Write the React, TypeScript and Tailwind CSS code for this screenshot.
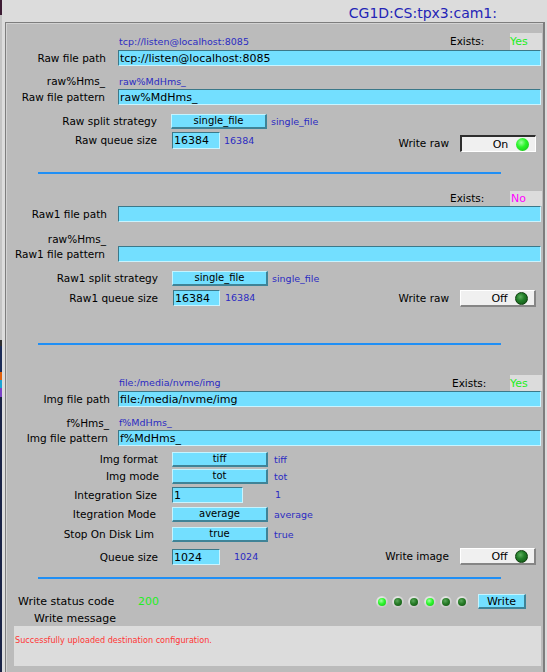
import React from 'react';

const inputCls =
  'flex items-center overflow-hidden whitespace-nowrap bg-[#73dfff] pl-[1px] text-[11px] leading-none border-t border-l border-b border-r border-t-[#3b7889] border-l-[#3b7889] border-b-[#c9f4ff] border-r-[#c9f4ff]';
const comboCls =
  'flex items-center justify-center whitespace-nowrap bg-[#73dfff] text-[10px] leading-none border-t border-l border-b-2 border-r-2 border-t-[#c4f4ff] border-l-[#c4f4ff] border-b-[#3f8397] border-r-[#3f8397]';
const blueCls = 'whitespace-nowrap text-[9.5px] leading-none text-[#2b2bc2]';
const labelCls = 'flex shrink-0 items-center justify-end whitespace-nowrap text-[10.5px] leading-none';

function Led({ on, size }: { on: boolean; size: 'big' | 'small' }) {
  if (size === 'big') {
    return (
      <div
        className={
          on
            ? 'h-[13px] w-[13px] shrink-0 rounded-full bg-[radial-gradient(circle_at_40%_35%,#9dff9d_0%,#2af52a_40%,#14b814_100%)]'
            : 'h-[13px] w-[13px] shrink-0 rounded-full border border-[#0e3f0e] bg-[radial-gradient(circle_at_40%_35%,#5fb05f_0%,#23802a_40%,#0f4d12_100%)]'
        }
      />
    );
  }
  return (
    <div className="flex h-[12px] w-[12px] items-center justify-center rounded-full bg-[radial-gradient(circle_at_40%_35%,#f4f4f4_0%,#d6d6d6_50%,#a9a9a9_100%)]">
      <div
        className={
          on
            ? 'h-[8px] w-[8px] rounded-full bg-[radial-gradient(circle_at_40%_35%,#a0ffa0_0%,#2cf52c_45%,#17c017_100%)]'
            : 'h-[8px] w-[8px] rounded-full bg-[radial-gradient(circle_at_40%_35%,#5aa85a_0%,#267a26_45%,#114f11_100%)]'
        }
      />
    </div>
  );
}

function Toggle({ on }: { on: boolean }) {
  return (
    <div
      className={
        on
          ? 'ml-[11px] mr-[7px] flex h-[17px] w-[76px] shrink-0 items-center bg-[#f0f0f0] pl-[23px] border-t-2 border-l-2 border-b border-r border-t-[#2e2e2e] border-l-[#2e2e2e] border-b-[#ffffff] border-r-[#ffffff]'
          : 'ml-[11px] mr-[7px] flex h-[17px] w-[76px] shrink-0 items-center bg-[#f0f0f0] pl-[23px] border-t border-l border-b-2 border-r-2 border-t-[#ffffff] border-l-[#ffffff] border-b-[#858585] border-r-[#858585]'
      }
    >
      <span className="flex-1 text-center text-[11px] leading-none">{on ? 'On' : 'Off'}</span>
      <div className="mr-[6px]">
        <Led on={on} size="big" />
      </div>
    </div>
  );
}

function Separator({ className }: { className: string }) {
  return <div className={'ml-[31px] h-[2px] w-[463px] shrink-0 bg-[#1f8ff5] ' + className} />;
}

function DesktopEdge() {
  return (
    <div className="flex w-[2px] shrink-0 flex-col">
      <div className="h-[15px] bg-[#3d1c34]" />
      <div className="h-[325px] bg-[#c4c4c4]" />
      <div className="h-[6px] bg-[#2e2e2e]" />
      <div className="h-[26px] bg-[#1b2b57]" />
      <div className="h-[8px] bg-[#e0600c]" />
      <div className="h-[8px] bg-[#1ba2d2]" />
      <div className="h-[9px] bg-[#7a42c6]" />
      <div className="flex-1 bg-[#1a2346]" />
    </div>
  );
}

export default function App() {
  return (
    <div className="flex h-[672px] w-[547px] overflow-hidden bg-[#dcdcdc] font-['DejaVu_Sans',sans-serif] text-black">
      <DesktopEdge />
      <div className="flex min-w-0 flex-1 flex-col">
        {/* Title */}
        <div className="flex h-[22px] shrink-0 items-center justify-end pr-[50px] pt-[4px] text-[14px] leading-none text-[#2424b6]">
          CG1D:CS:tpx3:cam1:
        </div>

        {/* Panel */}
        <div className="ml-[3px] mr-[2px] flex-1 border-l border-r-2 border-t border-[#7d7d7d]">
          <div className="flex h-full flex-col border-l border-t border-[#d2d2d2] bg-[#bbbbbb]">
            {/* Raw section */}
            <div className="mt-[9px] flex h-[17px] shrink-0 items-center">
              <div className="w-[112px] shrink-0" />
              <div className={'w-[331px] ' + blueCls}>tcp://listen@localhost:8085</div>
              <div className="w-[60px] text-[10.5px] leading-none">Exists:</div>
              <div className="flex h-full w-[32px] items-center bg-[#dcdcdc] text-[11px] leading-none text-[#22ee22]">Yes</div>
            </div>
            <div className="flex h-[16px] shrink-0">
              <div className={'w-[99px] ' + labelCls}>Raw file path</div>
              <div className={'ml-[12px] mr-[2px] flex-1 ' + inputCls}>tcp://listen@localhost:8085</div>
            </div>
            <div className="mt-[8px] flex h-[15px] shrink-0 items-center">
              <div className={'w-[98px] ' + labelCls}>raw%Hms_</div>
              <div className={'ml-[14px] ' + blueCls}>raw%MdHms_</div>
            </div>
            <div className="flex h-[16px] shrink-0">
              <div className={'w-[98px] ' + labelCls}>Raw file pattern</div>
              <div className={'ml-[13px] mr-[2px] flex-1 ' + inputCls}>raw%MdHms_</div>
            </div>
            <div className="mt-[9px] flex h-[15px] shrink-0">
              <div className={'w-[150px] ' + labelCls}>Raw split strategy</div>
              <div className={'ml-[14px] w-[96px] ' + comboCls}>single_file</div>
              <div className={'ml-[4px] flex items-center ' + blueCls}>single_file</div>
            </div>
            <div className="mt-[3px] flex h-[20px] shrink-0 items-start">
              <div className={'h-[17px] w-[150px] ' + labelCls}>Raw queue size</div>
              <div className={'ml-[15px] h-[17px] w-[48px] ' + inputCls}>16384</div>
              <div className={'ml-[4px] flex h-[17px] items-center ' + blueCls}>16384</div>
              <div className="ml-auto mt-[3px] flex h-[17px] items-center">
                <span className="text-[10.5px] leading-none">Write raw</span>
                <Toggle on={true} />
              </div>
            </div>
            <Separator className="mt-[20px]" />

            {/* Raw1 section */}
            <div className="mt-[17px] flex h-[15px] shrink-0 items-center">
              <div className="w-[443px] shrink-0" />
              <div className="w-[60px] text-[10.5px] leading-none">Exists:</div>
              <div className="flex h-full w-[32px] items-center bg-[#dcdcdc] pl-[1px] text-[11px] leading-none text-[#ff00ff]">No</div>
            </div>
            <div className="flex h-[16px] shrink-0">
              <div className={'w-[100px] ' + labelCls}>Raw1 file path</div>
              <div className={'ml-[11px] mr-[2px] flex-1 ' + inputCls} />
            </div>
            <div className="mt-[10px] flex h-[14px] shrink-0 items-center">
              <div className={'w-[99px] ' + labelCls}>raw%Hms_</div>
            </div>
            <div className="flex h-[16px] shrink-0">
              <div className={'w-[98px] ' + labelCls}>Raw1 file pattern</div>
              <div className={'ml-[13px] mr-[2px] flex-1 ' + inputCls} />
            </div>
            <div className="mt-[9px] flex h-[15px] shrink-0">
              <div className={'w-[151px] ' + labelCls}>Raw1 split strategy</div>
              <div className={'ml-[14px] w-[96px] ' + comboCls}>single_file</div>
              <div className={'ml-[4px] flex items-center ' + blueCls}>single_file</div>
            </div>
            <div className="mt-[4px] flex h-[17px] shrink-0 items-start">
              <div className={'h-[16px] w-[151px] ' + labelCls}>Raw1 queue size</div>
              <div className={'ml-[15px] h-[16px] w-[47px] ' + inputCls}>16384</div>
              <div className={'ml-[5px] flex h-[16px] items-center ' + blueCls}>16384</div>
              <div className="ml-auto flex h-[17px] items-center">
                <span className="text-[10.5px] leading-none">Write raw</span>
                <Toggle on={false} />
              </div>
            </div>
            <Separator className="mt-[36px]" />

            {/* Img section */}
            <div className="mt-[30px] flex h-[16px] shrink-0 items-center">
              <div className="w-[112px] shrink-0" />
              <div className={'w-[333px] ' + blueCls}>file:/media/nvme/img</div>
              <div className="w-[58px] text-[10.5px] leading-none">Exists:</div>
              <div className="flex h-full w-[32px] items-center bg-[#dcdcdc] text-[11px] leading-none text-[#22ee22]">Yes</div>
            </div>
            <div className="flex h-[16px] shrink-0">
              <div className={'w-[103px] ' + labelCls}>Img file path</div>
              <div className={'ml-[8px] mr-[2px] flex-1 ' + inputCls}>file:/media/nvme/img</div>
            </div>
            <div className="mt-[9px] flex h-[14px] shrink-0 items-center">
              <div className={'w-[102px] ' + labelCls}>f%Hms_</div>
              <div className={'ml-[10px] ' + blueCls}>f%MdHms_</div>
            </div>
            <div className="flex h-[16px] shrink-0">
              <div className={'w-[101px] ' + labelCls}>Img file pattern</div>
              <div className={'ml-[10px] mr-[2px] flex-1 ' + inputCls}>f%MdHms_</div>
            </div>
            <div className="mt-[6px] flex h-[15px] shrink-0">
              <div className={'w-[151px] ' + labelCls}>Img format</div>
              <div className={'ml-[14px] w-[96px] ' + comboCls}>tiff</div>
              <div className={'ml-[6px] flex items-center ' + blueCls}>tiff</div>
            </div>
            <div className="mt-[2px] flex h-[15px] shrink-0">
              <div className={'w-[152px] ' + labelCls}>Img mode</div>
              <div className={'ml-[13px] w-[96px] ' + comboCls}>tot</div>
              <div className={'ml-[6px] flex items-center ' + blueCls}>tot</div>
            </div>
            <div className="mt-[3px] flex h-[16px] shrink-0">
              <div className={'w-[150px] ' + labelCls}>Integration Size</div>
              <div className={'ml-[15px] w-[71px] ' + inputCls}>1</div>
              <div className={'ml-[32px] flex items-center ' + blueCls}>1</div>
            </div>
            <div className="mt-[4px] flex h-[15px] shrink-0">
              <div className={'w-[149px] ' + labelCls}>Itegration Mode</div>
              <div className={'ml-[16px] w-[96px] ' + comboCls}>average</div>
              <div className={'ml-[6px] flex items-center ' + blueCls}>average</div>
            </div>
            <div className="mt-[5px] flex h-[15px] shrink-0">
              <div className={'w-[147px] ' + labelCls}>Stop On Disk Lim</div>
              <div className={'ml-[18px] w-[96px] ' + comboCls}>true</div>
              <div className={'ml-[6px] flex items-center ' + blueCls}>true</div>
            </div>
            <div className="mt-[6px] flex h-[17px] shrink-0 items-start">
              <div className={'mt-[1px] h-[16px] w-[151px] ' + labelCls}>Queue size</div>
              <div className={'ml-[14px] mt-[1px] h-[16px] w-[48px] ' + inputCls}>1024</div>
              <div className={'ml-[14px] mt-[1px] flex h-[16px] items-center ' + blueCls}>1024</div>
              <div className="ml-auto flex h-[17px] items-center">
                <span className="text-[10.5px] leading-none">Write image</span>
                <Toggle on={false} />
              </div>
            </div>
            <Separator className="mt-[12px]" />

            {/* Write status */}
            <div className="mt-[15px] flex h-[15px] shrink-0 items-center">
              <div className="w-[131px] shrink-0 whitespace-nowrap pl-[11px] text-[11px] leading-none">Write status code</div>
              <div className="w-[238px] shrink-0 text-[11px] leading-none text-[#22ee22]">200</div>
              <div className="flex gap-[4px]">
                <Led on={true} size="small" />
                <Led on={false} size="small" />
                <Led on={false} size="small" />
                <Led on={true} size="small" />
                <Led on={false} size="small" />
                <Led on={false} size="small" />
              </div>
              <div className={'ml-[10px] h-[15px] w-[48px] !text-[11px] ' + comboCls}>Write</div>
            </div>
            <div className="mt-[2px] flex h-[14px] shrink-0 items-center pl-[27px] text-[11px] leading-none">Write message</div>
            <div className="ml-[7px] mr-[2px] mt-[1px] h-[40px] shrink-0 bg-[#dcdcdc] pl-[1px] pt-[10px] font-['DejaVu_Sans_Condensed',sans-serif] text-[9px] leading-none text-[#ff3535]">
              Successfully uploaded destination configuration.
            </div>
          </div>
        </div>
      </div>
    </div>
  );
}
